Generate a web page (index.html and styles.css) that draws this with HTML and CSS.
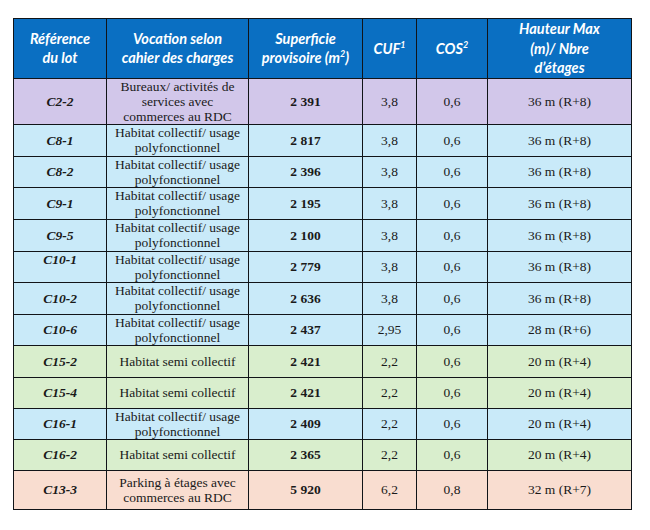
FILE: index.html
```html
<!DOCTYPE html>
<html lang="fr">
<head>
<meta charset="utf-8">
<title>Lots</title>
<link rel="stylesheet" href="styles.css">
</head>
<body>
<table class="lots">
  <colgroup>
    <col class="c-ref"><col class="c-voc"><col class="c-sup"><col class="c-cuf"><col class="c-cos"><col class="c-h">
  </colgroup>
  <thead>
    <tr class="head">
      <th>Référence<br>du lot</th>
      <th>Vocation selon<br>cahier des charges</th>
      <th>Superficie<br>provisoire (m<sup>2</sup>)</th>
      <th>CUF<sup>1</sup></th>
      <th>COS<sup>2</sup></th>
      <th>Hauteur Max<br>(m)/ Nbre<br>d’étages</th>
    </tr>
  </thead>
  <tbody>
    <tr class="purple tall"><td class="ref">C2-2</td><td>Bureaux/ activités de<br>services avec<br>commerces au RDC</td><td class="num">2 391</td><td>3,8</td><td>0,6</td><td>36 m (R+8)</td></tr>
    <tr class="blue r32"><td class="ref">C8-1</td><td>Habitat collectif/ usage<br>polyfonctionnel</td><td class="num">2 817</td><td>3,8</td><td>0,6</td><td>36 m (R+8)</td></tr>
    <tr class="blue r31"><td class="ref">C8-2</td><td>Habitat collectif/ usage<br>polyfonctionnel</td><td class="num">2 396</td><td>3,8</td><td>0,6</td><td>36 m (R+8)</td></tr>
    <tr class="blue r32"><td class="ref">C9-1</td><td>Habitat collectif/ usage<br>polyfonctionnel</td><td class="num">2 195</td><td>3,8</td><td>0,6</td><td>36 m (R+8)</td></tr>
    <tr class="blue r32"><td class="ref">C9-5</td><td>Habitat collectif/ usage<br>polyfonctionnel</td><td class="num">2 100</td><td>3,8</td><td>0,6</td><td>36 m (R+8)</td></tr>
    <tr class="blue r31"><td class="ref top">C10-1</td><td>Habitat collectif/ usage<br>polyfonctionnel</td><td class="num">2 779</td><td>3,8</td><td>0,6</td><td>36 m (R+8)</td></tr>
    <tr class="blue r32"><td class="ref">C10-2</td><td>Habitat collectif/ usage<br>polyfonctionnel</td><td class="num">2 636</td><td>3,8</td><td>0,6</td><td>36 m (R+8)</td></tr>
    <tr class="blue r31"><td class="ref">C10-6</td><td>Habitat collectif/ usage<br>polyfonctionnel</td><td class="num">2 437</td><td>2,95</td><td>0,6</td><td>28 m (R+6)</td></tr>
    <tr class="green r32"><td class="ref">C15-2</td><td>Habitat semi collectif</td><td class="num">2 421</td><td>2,2</td><td>0,6</td><td>20 m (R+4)</td></tr>
    <tr class="green r31"><td class="ref">C15-4</td><td>Habitat semi collectif</td><td class="num">2 421</td><td>2,2</td><td>0,6</td><td>20 m (R+4)</td></tr>
    <tr class="blue r31"><td class="ref">C16-1</td><td>Habitat collectif/ usage<br>polyfonctionnel</td><td class="num">2 409</td><td>2,2</td><td>0,6</td><td>20 m (R+4)</td></tr>
    <tr class="green r31"><td class="ref">C16-2</td><td>Habitat semi collectif</td><td class="num">2 365</td><td>2,2</td><td>0,6</td><td>20 m (R+4)</td></tr>
    <tr class="peach r39"><td class="ref">C13-3</td><td>Parking à étages avec<br>commerces au RDC</td><td class="num">5 920</td><td>6,2</td><td>0,8</td><td>32 m (R+7)</td></tr>
  </tbody>
</table>
</body>
</html>
```

FILE: styles.css
```css
html, body {
  margin: 0;
  background: #ffffff;
}
body {
  padding: 18px 0 0 13px;
}
.lots {
  border-collapse: collapse;
  table-layout: fixed;
  width: 618px;
  font-family: "Liberation Serif", "DejaVu Serif", serif;
  font-size: 13.5px;
  color: #1a1a1a;
}
.c-ref { width: 93px; }
.c-voc { width: 142px; }
.c-sup { width: 114px; }
.c-cuf { width: 54px; }
.c-cos { width: 71px; }
.c-h { width: 144px; }

.lots th, .lots td {
  border: 1px solid #111418;
  text-align: center;
  vertical-align: middle;
  padding: 0 2px;
}
.lots td {
  font-family: "Liberation Serif", "DejaVu Serif", serif;
  line-height: 15px;
}
.lots th {
  background: #0a6fc2;
  color: #ffffff;
  font-family: Lato, "Open Sans", sans-serif;
  font-weight: 700;
  font-style: italic;
  font-size: 14.5px;
  line-height: 19.5px;
  height: 58px;
}
.lots sup {
  font-size: 9px;
  line-height: 0;
  vertical-align: 6px;
}
.ref {
  font-weight: 700;
  font-style: italic;
}
.ref.top {
  vertical-align: top;
  padding-top: 0;
}
.num {
  font-weight: 700;
}
.tall td { height: 45px; }
.r32 td { height: 31px; }
.r31 td { height: 30px; }
.r39 td { height: 38px; }

.purple td { background: #d2c7ea; }
.blue td { background: #c9eaf9; }
.green td { background: #d9eecd; }
.peach td { background: #f9ddd0; }
```
